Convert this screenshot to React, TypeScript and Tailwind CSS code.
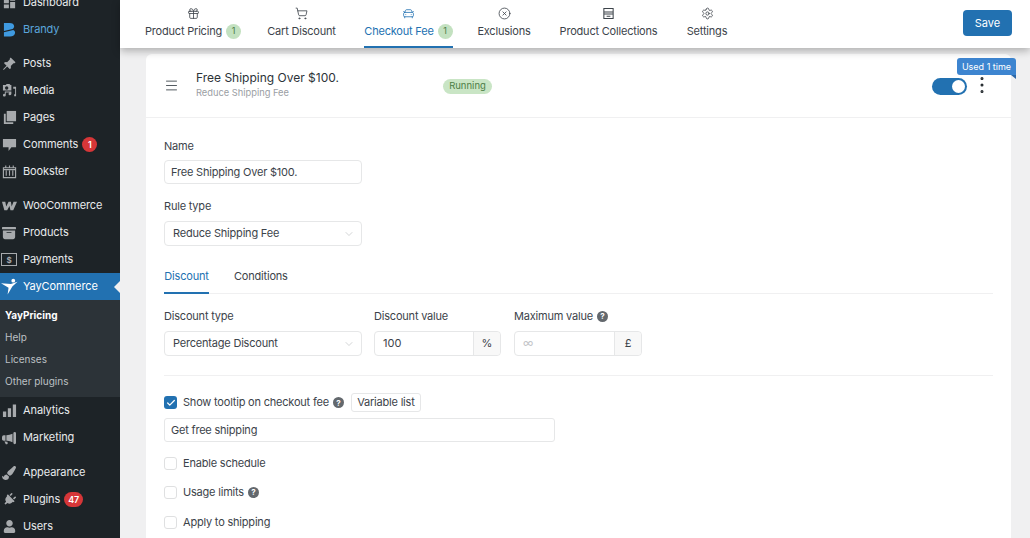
import type { ReactNode } from 'react'
import { CarFront, Check, ChevronDown, CircleX, Gift, Menu, MoreVertical, Settings, ShoppingCart } from 'lucide-react'
import { BsArchiveFill, BsMegaphoneFill, BsPinAngleFill } from 'react-icons/bs'
import { FaPaintBrush, FaPlug, FaUser } from 'react-icons/fa'
import { MdDashboard } from 'react-icons/md'

function Glyph({ children }: { children: ReactNode }) {
  return (
    <svg viewBox="0 0 16 16" className="h-[15px] w-[15px]" fill="currentColor">
      {children}
    </svg>
  )
}

function Bookster() {
  return (
    <svg viewBox="0 0 16 16" className="h-[15px] w-[15px]" fill="none" stroke="currentColor" strokeWidth="1.2">
      <path d="M1.500 4h13v10.500h-13zM4 1.500V4M8 1.500V4M12 1.500V4M4.500 7v5.500M8 7v5.500M11.500 7v5.500M1.500 6h13" />
    </svg>
  )
}

function Payments() {
  return (
    <div className="flex h-[13px] w-[16px] items-center justify-center border-[1.5px] border-[#a7aaad] text-[8px] leading-none font-bold">$</div>
  )
}

function BrandyLogo() {
  return (
    <svg viewBox="0 0 14 16" className="h-[15px] w-[13px]" fill="#3f9ae0">
      <path d="M1 1h6c3 0 5 1.300 5 3.600 0 1.300-.6 2.200-1.700 2.800L1 9.500zM1 11l10-2.400c1.200.6 2 1.500 2 2.900C13 14 10.700 15.500 7.500 15.500H1z" />
    </svg>
  )
}

function YayLogo() {
  return (
    <svg viewBox="0 0 18 18" className="h-[17px] w-[17px]" fill="#fff">
      <circle cx="13" cy="2.800" r="2" />
      <path d="M0 5.500l10.500.8L17.500 4l-5.500 5-5 8.500 1-7.200z" />
    </svg>
  )
}

function Badge({ children }: { children: ReactNode }) {
  return (
    <span className="ml-[4px] flex h-[15px] min-w-[15px] items-center justify-center rounded-full bg-[#d63638] px-[4px] text-[9px] leading-none font-semibold text-white">{children}</span>
  )
}

function NavRow({ icon, label, badge, color = 'text-[#e8eaec]' }: { icon: ReactNode; label: string; badge?: string; color?: string }) {
  return (
    <div className={`flex h-[27px] shrink-0 items-center text-[11px] tracking-[-0.1px] ${color}`}>
      <div className="flex w-[23px] shrink-0 justify-center pr-[6px] pl-[1px] text-[#a7aaad]">{icon}</div>
      <span>{label}</span>
      {badge && <Badge>{badge}</Badge>}
    </div>
  )
}

function Sidebar() {
  return (
    <aside className="flex w-[120px] shrink-0 flex-col overflow-hidden bg-[#1d2327]">
      <div className="-mt-[11px]">
        <NavRow icon={<MdDashboard size={15} />} label="Dashboard" />
      </div>
      <NavRow icon={<BrandyLogo />} label="Brandy" color="text-[#5ba6dc]" />
      <div className="h-[7px] shrink-0" />
      <NavRow icon={<BsPinAngleFill size={14} />} label="Posts" />
      <NavRow
        icon={
          <Glyph>
            <path d="M1 2h3l1-1h3l1 1h1v6H1zm4 1.500a1.800 1.800 0 1 0 0 3.600 1.800 1.800 0 0 0 0-3.600z" fillRule="evenodd" />
            <path d="M12 4h3v10h-2v-2h1V6h-2zM3 9h7v2.500a1.500 1.500 0 1 1-1.200-1.400V10H4v3a1.500 1.500 0 1 1-1-1.400z" />
          </Glyph>
        }
        label="Media"
      />
      <NavRow
        icon={
          <Glyph>
            <path d="M5 1h10v11H5z" />
            <path d="M2 4h2v9h8v2H2z" />
          </Glyph>
        }
        label="Pages"
      />
      <NavRow
        icon={
          <Glyph>
            <path d="M1 2h14v9h-5l-3 4v-4H1z" />
          </Glyph>
        }
        label="Comments"
        badge="1"
      />
      <NavRow icon={<Bookster />} label="Bookster" />
      <div className="h-[7px] shrink-0" />
      <NavRow
        icon={
          <Glyph>
            <path d="M0 4h3.500l1 5 2.500-5h2.500l.8 5 2-5H16l-4 9H9L8 8.500 5.500 13H2.500z" />
          </Glyph>
        }
        label="WooCommerce"
      />
      <NavRow icon={<BsArchiveFill size={14} />} label="Products" />
      <NavRow icon={<Payments />} label="Payments" />
      <div className="relative flex h-[27px] shrink-0 items-center bg-[#2271b1] text-[11px] tracking-[-0.1px] text-white">
        <div className="flex w-[23px] shrink-0 justify-center pr-[4px]">
          <YayLogo />
        </div>
        <span>YayCommerce</span>
        <div className="absolute top-[8px] right-0 h-0 w-0 border-y-[6px] border-r-[6px] border-y-transparent border-r-[#f0f0f1]" />
      </div>
      <div className="flex h-[97px] shrink-0 flex-col justify-center bg-[#2c3338] pl-[5px] text-[10px] text-[#bcc0c4]">
        <div className="flex h-[22px] items-center font-bold text-white">YayPricing</div>
        <div className="flex h-[22px] items-center">Help</div>
        <div className="flex h-[22px] items-center">Licenses</div>
        <div className="flex h-[22px] items-center">Other plugins</div>
      </div>
      <NavRow
        icon={
          <Glyph>
            <path d="M1 9h3.500v6H1zM6.200 5.500h3.500V15H6.200zM11.500 1.500H15V15h-3.500z" />
          </Glyph>
        }
        label="Analytics"
      />
      <NavRow icon={<BsMegaphoneFill size={14} />} label="Marketing" />
      <div className="h-[8px] shrink-0" />
      <NavRow icon={<FaPaintBrush size={14} />} label="Appearance" />
      <NavRow icon={<FaPlug size={13} className="rotate-45" />} label="Plugins" badge="47" />
      <NavRow icon={<FaUser size={13} />} label="Users" />
    </aside>
  )
}

function Count() {
  return <span className="ml-[4px] flex h-[15px] w-[15px] items-center justify-center rounded-full bg-[#c3e1c0] text-[9px] tracking-normal text-[#4a7c45]">1</span>
}

function CollectionsIcon() {
  return (
    <svg viewBox="0 0 14 14" className="h-[13px] w-[13px]" fill="none" stroke="currentColor" strokeWidth="1.100">
      <path d="M2 1.500h10v11H2zM2 5.500h10M2 7.500h10M5 10h4" />
    </svg>
  )
}

function Tab({ icon, label, count, active, width }: { icon: ReactNode; label: string; count?: boolean; active?: boolean; width: string }) {
  return (
    <div className={`relative flex h-[48px] shrink-0 flex-col items-center pt-[6px] ${width} ${active ? 'text-[#2271b1]' : 'text-[#3c434a]'}`}>
      <div className="flex h-[15px] items-center">{icon}</div>
      <div className="mt-[2px] flex h-[16px] items-center text-[11px] tracking-[-0.2px] whitespace-nowrap">
        {label}
        {count && <Count />}
      </div>
      {active && <div className="absolute right-0 bottom-0 left-0 h-[2px] bg-[#2271b1]" />}
    </div>
  )
}

function TopBar() {
  return (
    <header className="relative z-10 flex h-[48px] shrink-0 items-start bg-white shadow-[0_3px_8px_rgba(0,0,0,0.28)]">
      <div className="ml-[25px] flex">
        <Tab width="w-[96px]" icon={<Gift size={13} strokeWidth={1.5} />} label="Product Pricing" count />
        <Tab width="w-[69px] ml-[26px]" icon={<ShoppingCart size={13} strokeWidth={1.5} />} label="Cart Discount" />
        <Tab width="w-[89px] ml-[28px]" icon={<CarFront size={13} strokeWidth={1.5} />} label="Checkout Fee" count active />
        <Tab width="w-[54px] ml-[24px]" icon={<CircleX size={13} strokeWidth={1.5} />} label="Exclusions" />
        <Tab width="w-[99px] ml-[28px]" icon={<CollectionsIcon />} label="Product Collections" />
        <Tab width="w-[42px] ml-[28px]" icon={<Settings size={13} strokeWidth={1.5} />} label="Settings" />
      </div>
      <button className="absolute top-[10px] right-[18px] h-[26px] w-[49px] rounded-[4px] bg-[#2271b1] text-[11px] text-white">Save</button>
    </header>
  )
}

function Label({ children }: { children: ReactNode }) {
  return <div className="flex h-[16px] items-center text-[11px] tracking-[-0.2px] text-[#3c434a]">{children}</div>
}

function Help() {
  return (
    <span className="ml-[4px] flex h-[11px] w-[11px] items-center justify-center rounded-full bg-[#63686d] text-[8px] leading-none font-bold tracking-normal text-white">?</span>
  )
}

function Select({ label }: { label: string }) {
  return (
    <div className="flex h-[25px] w-[198px] items-center justify-between rounded-[4px] border border-[#e6e7e8] pr-[6px] pl-[8px] text-[11px] tracking-[-0.2px] text-[#3c434a]">
      {label}
      <ChevronDown size={12} strokeWidth={1.2} className="text-[#b5b8bb]" />
    </div>
  )
}

function Addon({ value, unit, width, muted }: { value: string; unit: string; width: string; muted?: boolean }) {
  return (
    <div className={`flex h-[25px] rounded-[4px] border border-[#e6e7e8] text-[11px] text-[#3c434a] ${width}`}>
      <div className={`flex flex-1 items-center pl-[8px] ${muted ? 'text-[#c4c6c9]' : ''}`}>{value}</div>
      <div className="flex w-[27px] items-center justify-center rounded-r-[4px] border-l border-[#e6e7e8] bg-[#f8f8f8]">{unit}</div>
    </div>
  )
}

function CheckRow({ label, help, className }: { label: string; help?: boolean; className: string }) {
  return (
    <div className={`flex h-[16px] items-center text-[11px] tracking-[-0.2px] text-[#3c434a] ${className}`}>
      <div className="mr-[6px] h-[13px] w-[13px] rounded-[3px] border border-[#dfe0e1] bg-white" />
      {label}
      {help && <Help />}
    </div>
  )
}

function Card() {
  return (
    <section className="mt-[6px] ml-[26px] w-[865px] flex-1 rounded-t-[6px] bg-white">
      <div className="relative flex h-[64px] items-center border-b border-[#f0f0f1] pl-[18px]">
        <Menu size={15} strokeWidth={1.4} className="text-[#3c434a]" />
        <div className="ml-[17px] w-[247px] pb-[2px]">
          <div className="text-[12px] leading-[16px] text-[#2c3338]">Free Shipping Over $100.</div>
          <div className="text-[9.300px] leading-[13px] text-[#9a9ea3]">Reduce Shipping Fee</div>
        </div>
        <span className="mt-[2px] flex h-[15px] w-[49px] items-center justify-center rounded-full bg-[#c9e5c5] text-[9.500px] text-[#4c7d46]">Running</span>
        <div className="mt-[1px] ml-auto flex items-center pr-[18px]">
          <div className="flex h-[17px] w-[35px] items-center justify-end rounded-full bg-[#2271b1] pr-[2px]">
            <div className="h-[13px] w-[13px] rounded-full bg-white" />
          </div>
          <MoreVertical size={22} strokeWidth={1.3} className="-mt-[2px] ml-[4px] text-[#1d2327]" />
        </div>
        <div className="absolute top-[4px] -right-[5px] flex h-[17px] w-[59px] items-center justify-center rounded-t-[3px] rounded-bl-[3px] bg-[#3d85d0] text-[9px] text-white">Used 1 time</div>
        <div className="absolute top-[21px] -right-[5px] h-0 w-0 border-t-[4px] border-l-[5px] border-t-[#2c68a8] border-l-transparent" />
      </div>

      <div className="px-[18px]">
        <div className="pt-[20px]">
          <Label>Name</Label>
        </div>
        <div className="mt-[6px] flex h-[24px] w-[198px] items-center rounded-[4px] border border-[#e6e7e8] pl-[6px] text-[11px] tracking-[-0.2px] text-[#3c434a]">Free Shipping Over $100.</div>
        <div className="mt-[14px]">
          <Label>Rule type</Label>
        </div>
        <div className="mt-[7px]">
          <Select label="Reduce Shipping Fee" />
        </div>

        <div className="mt-[19px] flex h-[29px] w-[829px] items-start border-b border-[#f0f0f1] text-[11px] tracking-[-0.2px]">
          <div className="flex h-[29px] w-[45px] items-start justify-center border-b-2 border-[#2271b1] pt-[3px] text-[#2271b1]">Discount</div>
          <div className="ml-[25px] pt-[3px] text-[#3c434a]">Conditions</div>
        </div>

        <div className="mt-[14px] flex">
          <div className="w-[198px]">
            <Label>Discount type</Label>
            <div className="mt-[7px]">
              <Select label="Percentage Discount" />
            </div>
          </div>
          <div className="ml-[12px] w-[128px]">
            <Label>Discount value</Label>
            <div className="mt-[7px]">
              <Addon value="100" unit="%" width="w-[127px]" />
            </div>
          </div>
          <div className="ml-[12px]">
            <Label>
              Maximum value
              <Help />
            </Label>
            <div className="mt-[7px]">
              <Addon value="∞" unit="£" width="w-[128px]" muted />
            </div>
          </div>
        </div>

        <div className="mt-[19px] h-px w-[829px] bg-[#f0f0f1]" />

        <div className="mt-[17px] flex h-[19px] items-center text-[11px] tracking-[-0.2px] text-[#3c434a]">
          <div className="mr-[6px] flex h-[13px] w-[13px] items-center justify-center rounded-[3px] bg-[#2271b1]">
            <Check size={10} strokeWidth={3} className="text-white" />
          </div>
          Show tooltip on checkout fee
          <Help />
          <span className="ml-[7px] flex h-[19px] w-[70px] items-center justify-center rounded-[3px] border border-[#e6e7e8]">Variable list</span>
        </div>
        <div className="mt-[6px] flex h-[24px] w-[391px] items-center rounded-[3px] border border-[#e6e7e8] pl-[6px] text-[11px] tracking-[-0.2px] text-[#3c434a]">Get free shipping</div>

        <CheckRow label="Enable schedule" className="mt-[13px]" />
        <CheckRow label="Usage limits" help className="mt-[13px]" />
        <CheckRow label="Apply to shipping" className="mt-[14px]" />
      </div>
    </section>
  )
}

export default function App() {
  return (
    <div className="flex h-[538px] w-[1030px] overflow-hidden bg-[#f0f0f1] font-['Inter','Liberation_Sans',sans-serif]">
      <Sidebar />
      <main className="flex min-w-0 flex-1 flex-col">
        <TopBar />
        <Card />
      </main>
    </div>
  )
}
